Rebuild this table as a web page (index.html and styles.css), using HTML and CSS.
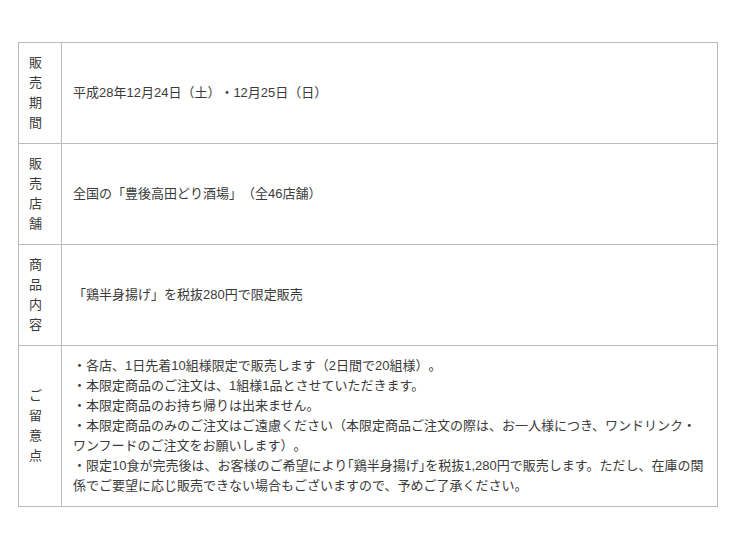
FILE: index.html
```html
<!DOCTYPE html>
<html lang="ja">
<head>
<meta charset="utf-8">
<link rel="stylesheet" href="styles.css">
</head>
<body>
<div class="wrap">
<table class="info">
  <tr>
    <th class="label">販<br>売<br>期<br>間</th>
    <td class="body">平成28年12月24日（土）・12月25日（日）</td>
  </tr>
  <tr>
    <th class="label">販<br>売<br>店<br>舗</th>
    <td class="body">全国の「豊後高田どり酒場」（全46店舗）</td>
  </tr>
  <tr>
    <th class="label">商<br>品<br>内<br>容</th>
    <td class="body">「鶏半身揚げ」を税抜280円で限定販売</td>
  </tr>
  <tr>
    <th class="label">ご<br>留<br>意<br>点</th>
    <td class="body">・各店、1日先着10組様限定で販売します（2日間で20組様）。<br>・本限定商品のご注文は、1組様1品とさせていただきます。<br>・本限定商品のお持ち帰りは出来ません。<br>・本限定商品のみのご注文はご遠慮ください（本限定商品ご注文の際は、お一人様につき、ワンドリンク・ワンフードのご注文をお願いします）。<br>・限定10食が完売後は、お客様のご希望により｢鶏半身揚げ｣を税抜1,280円で販売します。ただし、在庫の関係でご要望に応じ販売できない場合もございますので、予めご了承ください。</td>
  </tr>
</table>
</div>
</body>
</html>
```
FILE: styles.css
```css
html, body {
  margin: 0;
  padding: 0;
  background: #fff;
}
.wrap {
  padding: 42px 0 0 18px;
}
.info {
  width: 700px;
  border-collapse: collapse;
  font-family: "Liberation Sans", "Noto Sans CJK JP", sans-serif;
  font-size: 13px;
  line-height: 20px;
  color: #3a3a3a;
  text-spacing-trim: space-all;
}
.info th, .info td {
  border: 1px solid #bbb;
  vertical-align: middle;
  font-weight: normal;
}
.info .label {
  width: 22px;
  padding: 10px 10px;
  text-align: left;
}
.info .body {
  padding: 10px 10px 10px 11px;
  text-align: left;
}
```
